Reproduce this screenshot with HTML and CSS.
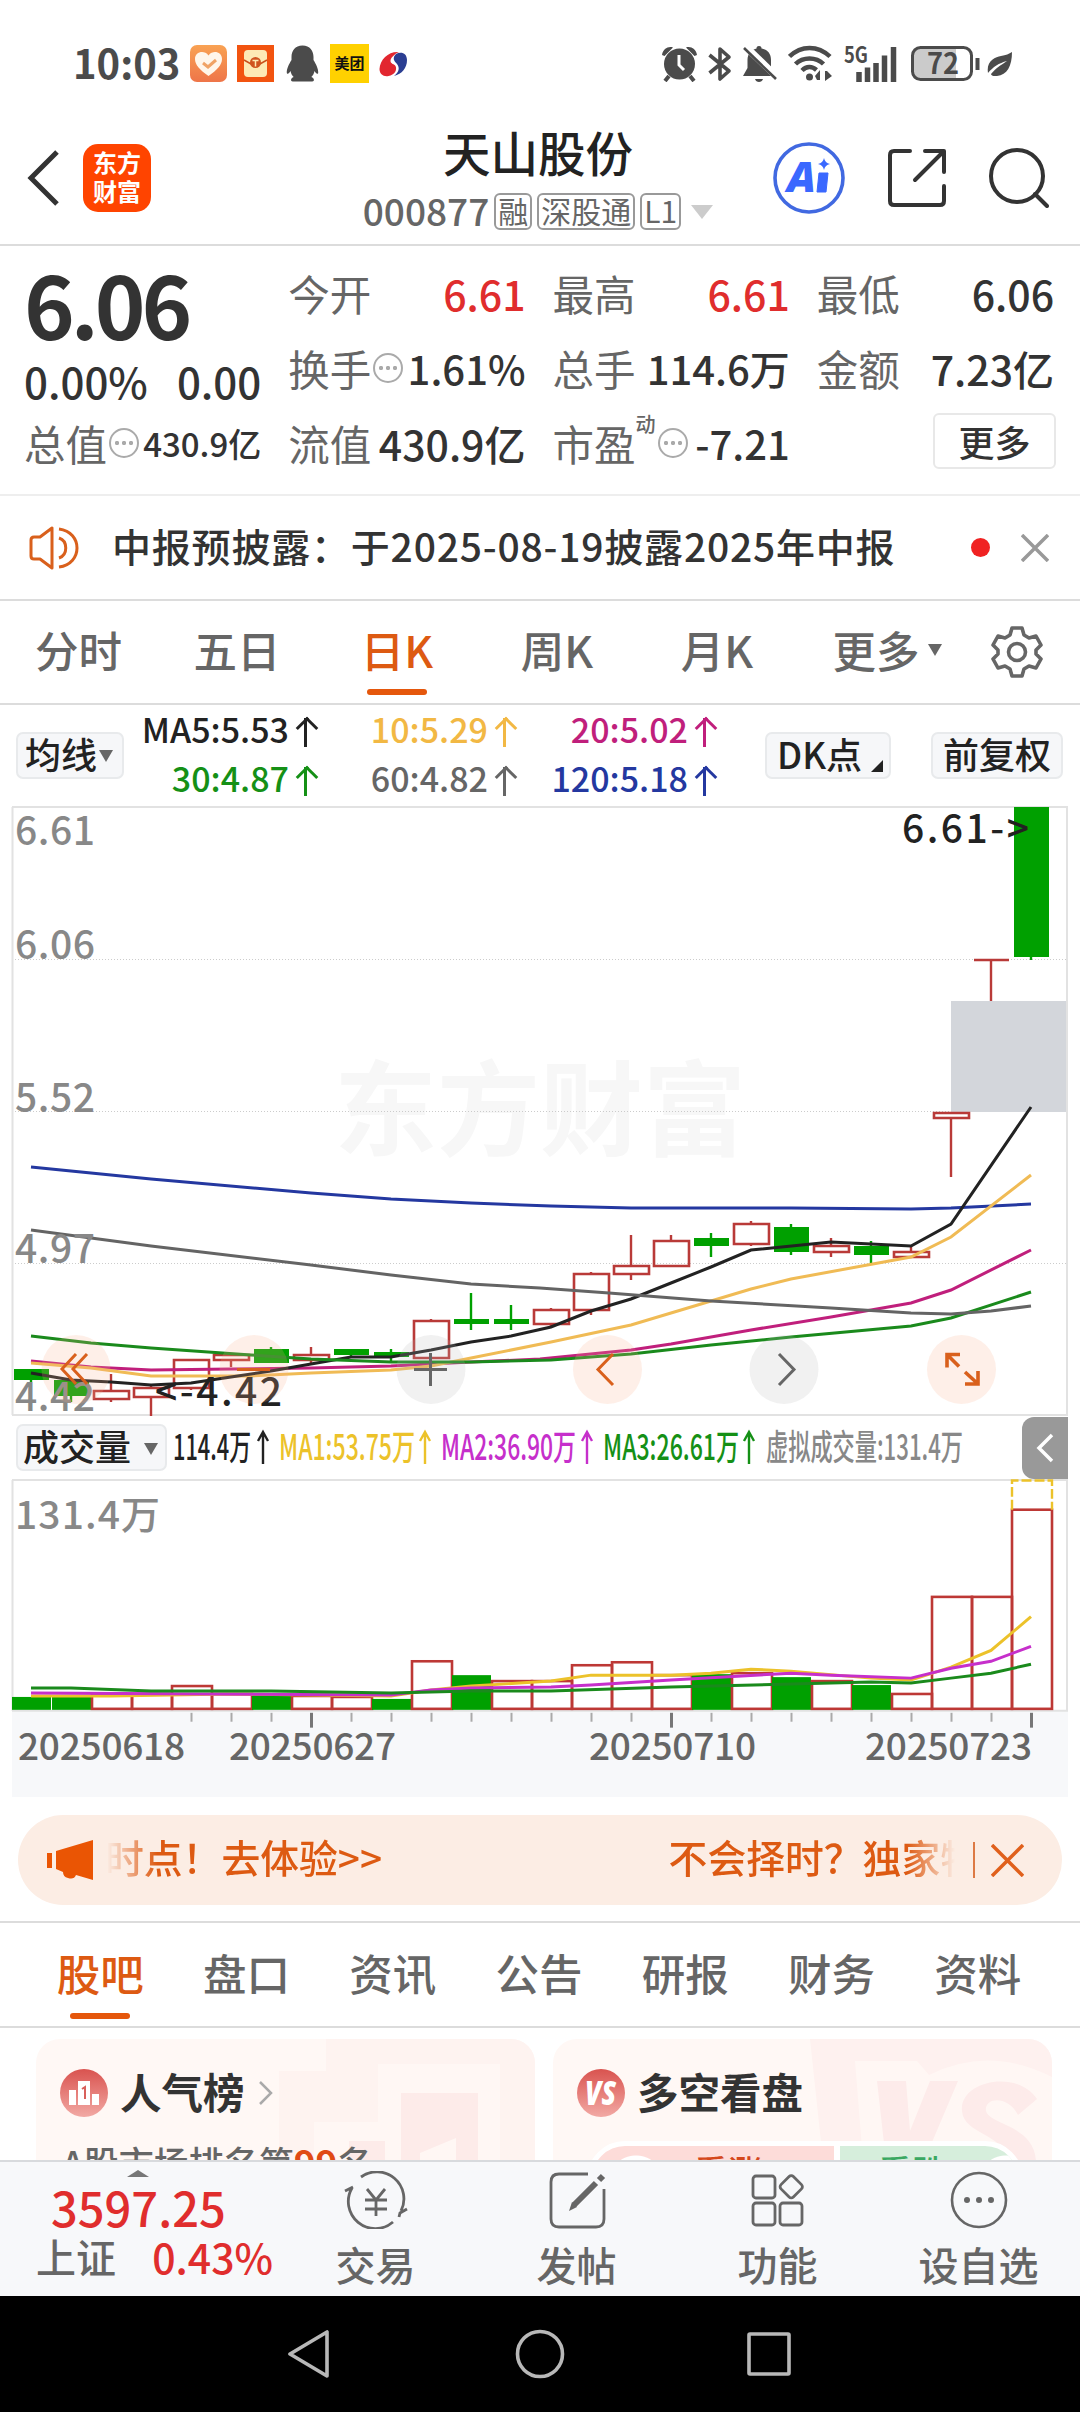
FILE: index.html
```html
<!DOCTYPE html>
<html lang="zh-CN">
<head>
    <meta charset="UTF-8">
    <meta name="viewport" content="width=device-width, initial-scale=1.0">
    <title>天山股份 000877</title>
    <link rel="stylesheet" href="styles.css">
</head>
<body>
    <div class="status-bar">
        <span class="clock">10:03</span>
        <div class="status-left">
            <svg width="37" height="37" viewBox="0 0 37 37">
                <defs><linearGradient id="heart-bg" x1="0" y1="0" x2="0" y2="1"><stop offset="0" stop-color="#f9a253"/><stop offset="1" stop-color="#ee7549"/></linearGradient></defs>
                <rect width="37" height="37" rx="7" fill="url(#heart-bg)"/>
                <path d="M18.500 31C10 25 5 20 5 14c0-7 9-9.500 13.500-3.500C23 4.500 32 7 32 14c0 6-5 11-13.500 17z" fill="#fff6ea"/>
                <path d="M13 18l5 4 8-7" fill="none" stroke="#f0a365" stroke-width="3"/>
            </svg>
            <svg width="37" height="37" viewBox="0 0 37 37">
                <rect width="37" height="37" fill="#f25410"/>
                <rect x="7" y="5" width="23" height="27" rx="4" fill="#fdeab5"/>
                <path d="M7 15l7 4h9l7-4" fill="none" stroke="#c9501c" stroke-width="1.500"/>
                <circle cx="18.500" cy="17.500" r="5.500" fill="#cf5420"/>
                <path d="M15.500 15.500h6M18.500 15.500v6" stroke="#fdeab5" stroke-width="1.500"/>
            </svg>
            <svg class="penguin" width="33" height="37" viewBox="0 0 33 37">
                <path d="M16.500 0.500C9 0.500 5.500 6 5.500 12v3C3 19 .5 24 .8 28c.7 2 2.500 0 3.700-2 .5 2.500 1.500 4.500 3.200 6-3.500 1.500-3.200 4.500-1 4.500h19.600c2.200 0 2.500-3-1-4.500 1.700-1.500 2.700-3.500 3.200-6 1.200 2 3 4 3.700 2 .3-4-2.200-9-4.700-13v-3c0-6-3.500-11.500-11-11.500z" fill="#4b4b4b"/>
            </svg>
            <span class="meituan">美团</span>
            <svg width="29" height="26" viewBox="0 0 29 26">
                <path d="M20 1C10 0 1 8 .5 18c0 5 4 8 9 7 6-1 9-6 7-10-1-2-5-2-5-5s4-7 8.500-9z" fill="#e2262f"/>
                <path d="M17 3c5-3 11-1 11 6 0 8-5 14-13 16 5-4 6-8 3-12-3-3-5-6-1-10z" fill="#2b3e92"/>
            </svg>
        </div>
        <div class="status-right">
            <svg width="35" height="36" viewBox="0 0 35 36" fill="#4b4b4b">
                <circle cx="17.500" cy="18" r="15.500"/>
                <path d="M0 9C1 3 6 0 11 1.500L2.500 10zM35 9C34 3 29 0 24 1.500L32.500 10z"/>
                <path d="M7 30l-4 5M28 30l4 5" stroke="#4b4b4b" stroke-width="4"/>
                <path d="M17 9v10l5 5" fill="none" stroke="#fff" stroke-width="3"/>
            </svg>
            <svg width="24" height="36" viewBox="0 0 24 36">
                <path d="M1.500 9L21 25 12 33V3l9 8L1.500 27" fill="none" stroke="#4b4b4b" stroke-width="3.600" stroke-linejoin="round"/>
            </svg>
            <svg width="34" height="38" viewBox="0 0 34 38">
                <path d="M16 1c2 0 2.500 1 2.500 2.500C25 5 28 9 28 15v8l4 8H0l4.500-8v-8c0-6 3-10 9-11.500C13.500 2 14 1 16 1zM12 34h8c-1 4-7 4-8 0z" fill="#4b4b4b"/>
                <path d="M2 1l32 31" stroke="#fff" stroke-width="7"/>
                <path d="M1 3l32 31" stroke="#4b4b4b" stroke-width="2.600"/>
            </svg>
            <svg width="45" height="37" viewBox="0 0 45 37" fill="none" stroke="#4b4b4b" stroke-width="4.500">
                <path d="M1.500 11.500C13 0 30 0 42 11.500M7.500 19C15 11.500 28 11.500 35.500 19M14 25.500c4.500-4.500 10-4.500 14.500-.5"/>
                <circle cx="21.500" cy="32" r="3.500" fill="#4b4b4b" stroke="none"/>
                <path d="M27 31l5-6v10h-3zM37 36V26h2l5 5z" fill="#4b4b4b" stroke="none"/>
            </svg>
            <svg class="signal" width="53" height="36" viewBox="0 0 53 36">
                <text x="0" y="17" textLength="24" lengthAdjust="spacingAndGlyphs">5G</text>
                <path d="M15 36V26M23.500 36V21.500M32 36V17M40.500 36V9.500M49.500 36V1" stroke="#4b4b4b" stroke-width="5.500"/>
            </svg>
            <svg class="battery" width="70" height="36" viewBox="0 0 70 36">
                <path d="M8 2h37v32H8q-6 0-6-6V8q0-6 6-6z" fill="#cbcbcb"/>
                <rect x="1.500" y="1.500" width="59" height="32" rx="8" fill="none" stroke="#4b4b4b" stroke-width="3"/>
                <path d="M66.500 12v12" stroke="#4b4b4b" stroke-width="4"/>
                <text x="16" y="28" textLength="32" lengthAdjust="spacingAndGlyphs">72</text>
            </svg>
            <svg width="26" height="26" viewBox="0 0 26 26">
                <path d="M25 1c0 14-5 23-15 24-4 .3-6-.5-6-2 5-6 10-9 16-13C12 12 6 16 1 22-1 10 8 6 14 5c5-1 8-2 11-4z" fill="#4b4b4b"/>
            </svg>
        </div>
    </div>

    <div class="header">
        <div class="header-left">
            <svg width="32" height="56" viewBox="0 0 32 56"><path d="M30 2L4 28l26 26" fill="none" stroke="#333" stroke-width="5"/></svg>
            <div class="logo">东方<br>财富</div>
        </div>
        <div class="header-title">
            <div class="stock-name">天山股份</div>
            <div class="stock-code">
                <span class="code">000877</span>
                <span class="tag">融</span><span class="tag">深股通</span><span class="tag">L1</span>
                <span class="caret"></span>
            </div>
        </div>
        <div class="header-right">
            <svg width="72" height="72" viewBox="0 0 72 72">
                <circle cx="36" cy="36" r="34" fill="none" stroke="#4169e1" stroke-width="3.600"/>
                <text x="14" y="50" class="ai-text" textLength="29" lengthAdjust="spacingAndGlyphs">A</text>
                <path d="M46 31h9l-2 19h-9z" fill="#3a68ff" stroke="#3a68ff" stroke-linejoin="round"/>
                <path d="M51 16q1 5 6 6-5 1-6 6-1-5-6-6 5-1 6-6z" fill="#3a68ff"/>
            </svg>
            <svg width="58" height="58" viewBox="0 0 58 58" fill="none" stroke="#333" stroke-width="4" stroke-linecap="round" stroke-linejoin="round">
                <path d="M22 2H6Q2 2 2 6v46q0 4 4 4h46q4 0 4-4V37M37 2h19v21M55 3L27 31"/>
            </svg>
            <svg width="60" height="60" viewBox="0 0 60 60" fill="none" stroke="#333" stroke-width="4" stroke-linecap="round">
                <circle cx="28" cy="28" r="26"/><path d="M46 46l12 12"/>
            </svg>
        </div>
    </div>

    <div class="quote">
        <div class="quote-main">
            <div class="price">6.06</div>
            <div class="change"><span>0.00%</span><span>0.00</span></div>
            <div class="item"><label>总值</label><i class="more-dot"></i><b class="small">430.9亿</b></div>
        </div>
        <div class="quote-col">
            <div class="item"><label>今开</label><b class="up">6.61</b></div>
            <div class="item"><label>换手</label><i class="more-dot"></i><b class="mid">1.61%</b></div>
            <div class="item"><label>流值</label><b>430.9亿</b></div>
        </div>
        <div class="quote-col">
            <div class="item"><label>最高</label><b class="up">6.61</b></div>
            <div class="item"><label>总手</label><b class="mid">114.6万</b></div>
            <div class="item"><label>市盈</label><sup>动</sup><i class="more-dot"></i><b class="mid">-7.21</b></div>
        </div>
        <div class="quote-col">
            <div class="item"><label>最低</label><b>6.06</b></div>
            <div class="item"><label>金额</label><b>7.23亿</b></div>
            <div class="item"><button class="more-btn">更多</button></div>
        </div>
    </div>

    <div class="notice">
        <svg width="52" height="44" viewBox="0 0 52 44" fill="none" stroke="#d9601c" stroke-width="3">
            <path d="M23 2v40L11 33H5q-3 0-3-3V14q0-3 3-3h6z" stroke-linejoin="round"/>
            <path d="M30 12c9 3 9 17 0 20M30 3c24 3 24 35 0 38"/>
        </svg>
        <span class="notice-text">中报预披露：于2025-08-19披露2025年中报</span>
        <span class="red-dot"></span>
        <svg width="28" height="28" viewBox="0 0 28 28"><path d="M1 1l26 26M27 1L1 27" stroke="#999" stroke-width="3.500"/></svg>
    </div>

    <div class="period-tabs">
        <span>分时</span><span>五日</span><span class="active">日K</span><span>周K</span><span>月K</span>
        <span>更多<i class="tri"></i></span>
        <svg width="52" height="52" viewBox="0 0 52 52" fill="none" stroke="#666" stroke-width="3.600" stroke-linejoin="round">
            <path d="M21 2h10l2 7 5 3 7-2 5 9-5 5v4l5 5-5 9-7-2-5 3-2 7H21l-2-7-5-3-7 2-5-9 5-5v-4l-5-5 5-9 7 2 5-3z"/>
            <circle cx="26" cy="26" r="8.500"/>
        </svg>
    </div>

    <div class="ma-bar">
        <span class="chip chip-line">均线<i class="tri"></i></span>
        <div class="ma-grid">
            <span class="c-black">MA5:5.53<em></em></span><span class="c-yellow">10:5.29<em></em></span><span class="c-pink">20:5.02<em></em></span>
            <span class="c-green">30:4.87<em></em></span><span class="c-gray">60:4.82<em></em></span><span class="c-blue">120:5.18<em></em></span>
        </div>
        <span class="chip chip-dk">DK点<i class="corner"></i></span>
        <span class="chip chip-fq">前复权</span>
    </div>

    <svg class="k-chart" id="k-chart" width="1080" height="611" viewBox="0 806 1080 611"></svg>

    <div class="vol-bar">
        <span class="chip chip-vol">成交量<i class="tri"></i></span>
        <svg class="vol-legend" width="800" height="64" viewBox="170 1416 800 64">
            <text x="173" y="1460" textLength="78" lengthAdjust="spacingAndGlyphs" fill="#222">114.4万</text>
            <text x="279" y="1460" textLength="136" lengthAdjust="spacingAndGlyphs" fill="#ecc22a">MA1:53.75万</text>
            <text x="441" y="1460" textLength="135" lengthAdjust="spacingAndGlyphs" fill="#c62fcb">MA2:36.90万</text>
            <text x="603" y="1460" textLength="136" lengthAdjust="spacingAndGlyphs" fill="#159016">MA3:26.61万</text>
            <text x="766" y="1460" textLength="197" lengthAdjust="spacingAndGlyphs" fill="#888">虚拟成交量:131.4万</text>
            <g fill="none" stroke-width="2.400">
                <path d="M263 1464v-32m-5 9l5-9 5 9" stroke="#222"/>
                <path d="M425 1464v-32m-5 9l5-9 5 9" stroke="#ecc22a"/>
                <path d="M587 1464v-32m-5 9l5-9 5 9" stroke="#c62fcb"/>
                <path d="M749 1464v-32m-5 9l5-9 5 9" stroke="#159016"/>
            </g>
        </svg>
        <div class="collapse"><svg width="18" height="30" viewBox="0 0 18 30"><path d="M16 2L3 15l13 13" fill="none" stroke="#fff" stroke-width="3.500"/></svg></div>
    </div>

    <svg class="vol-chart" id="vol-chart" width="1080" height="318" viewBox="0 1479 1080 321" preserveAspectRatio="none"></svg>

    <div class="banner">
        <svg width="48" height="40" viewBox="0 0 48 40" fill="#ea5504"><path d="M0 13h5v15H0zM9 11l37-11v40l-17-5q-2 5-8 3-5-1-5-6l-7-3z"/></svg>
        <div class="marquee"><span>时点！去体验&gt;&gt;</span><span>不会择时？独家特</span></div>
        <i class="sep"></i>
        <svg width="33" height="33" viewBox="0 0 33 33"><path d="M1 1l31 31M32 1L1 32" stroke="#e0601c" stroke-width="3.500"/></svg>
    </div>

    <div class="info-tabs">
        <span class="active">股吧</span><span>盘口</span><span>资讯</span><span>公告</span><span>研报</span><span>财务</span><span>资料</span>
    </div>

    <div class="cards">
        <div class="card card-rank">
            <svg class="art" width="499" height="122" viewBox="0 0 499 122">
                <path d="M290 0h209v122H243V32h47z" fill="#fef3f0"/>
                <path d="M342 25h122v97H278V83h64z" fill="#fff7f4"/>
                <path d="M365 54h77v68h-22V99l-36 15v8h-19zM313 102h36v20h-36z" fill="#fdebe9"/>
            </svg>
            <div class="card-title">
                <svg width="48" height="48" viewBox="0 0 48 48">
                    <defs><linearGradient id="red-bg" x1="0" y1="0" x2="0" y2="1"><stop offset="0" stop-color="#d9534f"/><stop offset="1" stop-color="#f2a9a4"/></linearGradient></defs>
                    <circle cx="24" cy="24" r="24" fill="url(#red-bg)"/>
                    <path d="M9 21h7v15H9zM18 12h12v24H18zM32 25h7v11h-7z" fill="#fff"/>
                    <path d="M22 20l3-2v12" fill="none" stroke="#d9605b" stroke-width="2"/>
                </svg>
                <h3>人气榜</h3>
                <svg width="15" height="24" viewBox="0 0 15 24"><path d="M2 1l11 11L2 23" fill="none" stroke="#aaa" stroke-width="2.500"/></svg>
            </div>
            <div class="rank-text">A股市场排名第<b>99</b>名</div>
        </div>
        <div class="card card-vs">
            <svg class="art" width="499" height="122" viewBox="0 0 499 122">
                <path d="M257 0h242v122H270z" fill="#fef1ef"/>
                <path d="M302 22h62l12 14q60-30 123 2v84H310z" fill="#fff7f4"/>
                <path d="M324 42h29l4 50 20-50h28l-34 80h-38zM484 60c-20-30-78-18-75 12 2 24 42 22 46 50h28c-2-36-46-36-50-50-2-14 22-16 32 4z" fill="#fdebea"/>
            </svg>
            <div class="card-title">
                <svg width="48" height="48" viewBox="0 0 48 48">
                    <circle cx="24" cy="24" r="24" fill="url(#red-bg)"/>
                    <text x="8" y="36" class="vs-text" textLength="31" lengthAdjust="spacingAndGlyphs">VS</text>
                </svg>
                <h3>多空看盘</h3>
            </div>
            <div class="vote"><div class="bull">看涨</div><div class="bear">看跌</div></div>
        </div>
    </div>

    <div class="bottom-bar">
        <div class="index">
            <i class="tri-up"></i>
            <div class="index-value">3597.25</div>
            <div class="index-row"><span>上证</span><b>0.43%</b></div>
        </div>
        <div class="action">
            <svg width="66" height="58" viewBox="0 0 66 58" fill="none" stroke="#666" stroke-width="2.800">
                <path d="M18 6A27 27 0 0 1 58 40M50 51A27 27 0 0 1 9 17M2 20l8-4M64 38l-7 4-1 4M24 18l9 11 9-11M33 29v16M22 29h22M22 38h22"/>
            </svg>
            <span>交易</span>
        </div>
        <div class="action">
            <svg width="58" height="58" viewBox="0 0 58 58" fill="none" stroke="#666" stroke-width="2.800">
                <path d="M40 3H11Q3 3 3 11v37q0 8 8 8h37q8 0 8-8V18"/>
                <path d="M26 34l22-22M51 9l4-4" stroke-width="6"/>
                <path d="M24 31l5 5-8 4z" fill="#666" stroke="none"/>
            </svg>
            <span>发帖</span>
        </div>
        <div class="action">
            <svg width="54" height="58" viewBox="0 0 54 58" fill="none" stroke="#666" stroke-width="2.800">
                <rect x="2" y="5" width="22" height="22" rx="3"/><rect x="2" y="32" width="22" height="22" rx="3"/><rect x="29" y="32" width="22" height="22" rx="3"/>
                <rect x="31.500" y="7" width="17.500" height="17.500" rx="3" transform="rotate(45 40.250 15.750)"/>
            </svg>
            <span>功能</span>
        </div>
        <div class="action">
            <svg width="58" height="58" viewBox="0 0 58 58" fill="#666">
                <circle cx="29" cy="29" r="27" fill="none" stroke="#666" stroke-width="2.600"/>
                <circle cx="17" cy="29" r="3"/><circle cx="29" cy="29" r="3"/><circle cx="41" cy="29" r="3"/>
            </svg>
            <span>设自选</span>
        </div>
    </div>

    <div class="sys-nav">
        <svg width="504" height="52" viewBox="0 0 504 52" fill="none" stroke="#b8b8b8" stroke-width="3.600" stroke-linejoin="round">
            <path d="M39 4v44L2 26z"/><circle cx="252" cy="26" r="22.500"/><rect x="461" y="6" width="40" height="40" rx="1"/>
        </svg>
    </div>

    <script>
        // top, bottom, high, low, rising
        const candles = [
            [1369, 1380, 1369, 1382, 0], [1380, 1396, 1380, 1402, 0], [1391, 1399, 1374, 1402, 1], [1388, 1397, 1385, 1416, 1],
            [1360, 1388, 1360, 1390, 1], [1355, 1360, 1355, 1367, 1], [1349, 1363, 1347, 1363, 0], [1355, 1360, 1347, 1365, 1],
            [1349, 1355, 1349, 1357, 0], [1352, 1357, 1349, 1361, 0], [1321, 1358, 1319, 1358, 1], [1319, 1324, 1293, 1330, 0],
            [1319, 1324, 1305, 1330, 0], [1310, 1324, 1308, 1328, 1], [1274, 1310, 1272, 1315, 1], [1266, 1274, 1235, 1280, 1],
            [1241, 1266, 1235, 1266, 1], [1238, 1246, 1233, 1257, 0], [1224, 1244, 1221, 1246, 1], [1227, 1252, 1224, 1255, 0],
            [1246, 1252, 1238, 1257, 1], [1246, 1255, 1241, 1263, 0], [1252, 1257, 1246, 1257, 1], [1113, 1118, 1113, 1177, 1],
            [960, 960, 960, 1001, 1], [807, 957, 807, 960, 0]
        ];
        const averages = {
            '#2438a0': '31,1167 151,1179 311,1193 391,1199 471,1203 551,1206 631,1208 791,1208 911,1209 951,1208 1031,1204',
            '#c01f7c': '31,1361 91,1367 151,1370 231,1369 311,1368 391,1366 471,1362 540,1359 631,1350 671,1344 751,1330 831,1317 911,1303 951,1290 1031,1250',
            '#f0bb55': '31,1363 91,1368 151,1376 251,1376 311,1373 391,1370 431,1366 471,1358 551,1342 631,1325 671,1313 751,1289 791,1279 911,1257 951,1237 1031,1175',
            '#222': '31,1373 71,1380 111,1382 151,1385 191,1383 231,1377 271,1371 311,1364 351,1357 391,1357 431,1350 471,1342 511,1336 551,1327 591,1311 631,1299 671,1283 711,1267 751,1250 831,1242 871,1244 911,1246 951,1224 1031,1107',
            '#1a8a1c': '31,1336 91,1343 151,1348 251,1355 311,1359 391,1362 471,1362 551,1360 631,1354 711,1345 791,1337 911,1326 951,1318 1031,1292',
            '#646464': '31,1230 151,1246 311,1265 391,1275 471,1284 540,1288 609,1293 711,1301 831,1308 911,1313 951,1314 991,1311 1031,1306'
        };
        const RED = '#b93a38', GREEN = '#00a000';
        const line = (pts, color) => `<polyline points="${pts}" fill="none" stroke="${color}" stroke-width="3"/>`;

        let k = '<text x="334" y="1148" class="watermark" textLength="412">东方财富</text>';
        [959.5, 1111.5, 1263.5].forEach(y => {
            k += `<path d="M12 ${y}H1067" stroke="#ccc" stroke-dasharray="1 2"/>`;
        });
        k += '<rect x="951" y="1001" width="116" height="111" fill="#d3d6db"/>';
        k += '<path d="M12.500 807V1415M1067 807V1415M12 807H1068M12 1415H1068" stroke="#e2e2e2" stroke-width="2"/>';
        candles.forEach(([top, bottom, high, low, up], i) => {
            const x = 31 + i * 40, color = up ? RED : GREEN;
            k += `<path d="M${x} ${high}V${top}M${x} ${bottom}V${low}" stroke="${color}" stroke-width="2.400"/>`;
            k += up
                ? `<path d="M${x - 17} ${top}h35v${bottom - top}h-35z" fill="none" stroke="${color}" stroke-width="2.600"/>`
                : `<rect x="${x - 17}" y="${top}" width="35" height="${bottom - top}" fill="${color}"/>`;
        });
        for (const color in averages) k += line(averages[color], color);
        [[845, '6.61'], [959, '6.06'], [1112, '5.52'], [1263, '4.97'], [1411, '4.42']].forEach(([y, t]) => {
            k += `<text x="15" y="${y}" class="axis-label" textLength="80">${t}</text>`;
        });
        k += '<text x="902" y="843" class="mark" textLength="127">6.61-&gt;</text><text x="155" y="1406" class="mark" textLength="127">&lt;-4.42</text>';

        // floating chart tools
        [[76, 1], [254, 1], [431, 0], [607.5, 1], [784, 0], [961.5, 1]].forEach(([x, warm]) => {
            k += `<circle cx="${x}" cy="1369.500" r="34.500" fill="${warm ? '#f9b08c' : '#bbb'}" opacity="0.2"/>`;
        });
        k += `<g fill="none" stroke="#d9601c" stroke-width="3">
            <path d="M76 1354l-14 15 14 15M87 1354l-14 15 14 15M237 1369.500h33M613 1354l-15 15.500 15 15.500"/>
            <path d="M960 1354.500h-13v13M948 1355.500l11 11M978 1371v13h-13M977 1383l-12-11" stroke-width="3.600"/></g>
            <g fill="none" stroke="#666" stroke-width="3"><path d="M414 1369.500h33M430.500 1353v33M779 1354l15 15.500-15 15.500"/></g>`;
        document.getElementById('k-chart').innerHTML = k;

        const volumes = [
            [1699, 0], [1699, 0], [1697, 1], [1696, 1], [1688, 1], [1696, 1], [1696, 0], [1698, 1], [1699, 1], [1701, 0],
            [1663, 1], [1677, 0], [1683, 1], [1683, 1], [1667, 1], [1664, 1], [1677, 1], [1676, 0], [1675, 1], [1679, 0],
            [1683, 1], [1687, 0], [1696, 1], [1598, 1], [1598, 1], [1510, 1]
        ];
        let v = '<rect x="12" y="1713" width="1056" height="87" fill="#f7f8fa"/>';
        v += '<path d="M12.500 1480V1713M1067 1480V1713M12 1480H1068M12 1713H1068" stroke="#e2e2e2" stroke-width="2"/>';
        volumes.forEach(([top, up], i) => {
            const x = 12 + i * 40;
            v += up
                ? `<rect x="${x}" y="${top}" width="40" height="${1711 - top}" fill="none" stroke="#bd3835" stroke-width="2.600"/>`
                : `<rect x="${x}" y="${top}" width="39" height="${1712 - top}" fill="${GREEN}"/>`;
        });
        v += '<path d="M1012 1510V1480.500H1052V1510" fill="none" stroke="#ecc22a" stroke-width="2.400" stroke-dasharray="10 3"/>';
        v += line('31,1698 111,1698 231,1696 391,1698 431,1692 471,1688 551,1683 591,1677 671,1677 711,1675 751,1671 791,1673 871,1680 911,1682 951,1669 991,1652 1031,1618', '#ecc22a');
        v += line('31,1695 391,1697 431,1692 471,1690 551,1689 591,1687 671,1682 791,1675 831,1677 911,1680 951,1670 991,1663 1031,1648', '#c62fcb');
        v += line('31,1690 71,1690 151,1693 271,1693 391,1695 471,1693 551,1693 671,1689 791,1686 871,1684 911,1685 951,1680 991,1675 1031,1666', '#1a8a1c');
        for (let x = 191; x <= 1031; x += 40) {
            const major = (x - 311) % 360 === 0;
            v += `<path d="M${x + 0.5} 1715V${major ? 1730 : 1724}" stroke="${major ? '#777' : '#aaa'}" stroke-width="${major ? 3 : 2}"/>`;
        }
        [[18, '20250618'], [229, '20250627'], [589, '20250710'], [865, '20250723']].forEach(([x, t]) => {
            v += `<text x="${x}" y="1763" class="date-label" textLength="167">${t}</text>`;
        });
        v += '<text x="15" y="1529" class="axis-label" textLength="145">131.4万</text>';
        document.getElementById('vol-chart').innerHTML = v;
    </script>
</body>
</html>
```
FILE: styles.css
```css
* {
    margin: 0;
    padding: 0;
    box-sizing: border-box;
}

body {
    width: 1080px;
    height: 2412px;
    overflow: hidden;
    background: #fff;
    color: #333;
    font-family: "Noto Sans CJK SC", "Noto Sans", sans-serif;
    font-weight: 500;
}

i, em {
    font-style: normal;
}

svg {
    display: block;
    flex: none;
}

/* status bar */
.status-bar {
    height: 114px;
    padding: 13px 67px 0 73px;
    display: flex;
    align-items: center;
}

.clock {
    width: 117px;
    margin-top: -4px;
    font-size: 40px;
    line-height: 40px;
    font-weight: 700;
    color: #4b4b4b;
    white-space: nowrap;
}

.status-left {
    display: flex;
    align-items: center;
    gap: 10px;
}

.penguin {
    margin: 0 1px 0 2px;
}

.meituan {
    width: 39px;
    height: 39px;
    background: #ffd100;
    color: #111;
    font-size: 15px;
    line-height: 37px;
    font-weight: 700;
    text-align: center;
}

.status-right {
    margin-left: auto;
    display: flex;
    align-items: center;
    gap: 11px;
}

.signal text {
    font-size: 22px;
    font-weight: 700;
    fill: #4b4b4b;
}

.signal {
    margin-right: 3px;
}

.battery {
    margin-right: -5px;
}

.battery text {
    font-size: 29px;
    font-weight: 700;
    fill: #4b4b4b;
}

/* header */
.header {
    height: 132px;
    padding: 0 31px 0 27px;
    display: grid;
    grid-template-columns: 280px 1fr 280px;
    border-bottom: 2px solid #dcdcdc;
}

.header-left {
    display: flex;
    align-items: center;
    gap: 24px;
    height: 128px;
}

.logo {
    width: 68px;
    height: 68px;
    padding-top: 3px;
    border-radius: 15px;
    background: #ff4400;
    color: #fff;
    font-size: 24px;
    line-height: 29px;
    font-weight: 700;
    text-align: center;
}

.header-title {
    display: flex;
    flex-direction: column;
    align-items: center;
}

.stock-name {
    margin-top: 14px;
    font-size: 47.5px;
    line-height: 48px;
    font-weight: 500;
    color: #222;
}

.stock-code {
    display: flex;
    align-items: center;
    margin-top: 17px;
    gap: 5px;
    color: #666;
}

.code {
    font-size: 37px;
    line-height: 36px;
    margin-top: -4px;
}

.tag {
    height: 37px;
    padding: 0 2px;
    border: 2px solid #999;
    border-radius: 6px;
    font-size: 30px;
    line-height: 30px;
    font-weight: 400;
}

.caret {
    margin-left: 5px;
    border: 11px solid transparent;
    border-top: 14px solid #ccc;
    border-bottom: 0;
}

.header-right {
    display: flex;
    align-items: center;
    justify-content: flex-end;
    height: 128px;
    gap: 43px;
}

.ai-text {
    font-family: "Open Sans", sans-serif;
    font-size: 43px;
    font-weight: 800;
    font-style: italic;
    fill: #3a68ff;
}

/* quote */
.quote {
    height: 250px;
    padding: 9px 26px 0 24px;
    display: grid;
    grid-template-columns: repeat(4, 1fr);
    gap: 27px;
    border-bottom: 2px solid #eee;
}

.item {
    height: 75px;
    display: flex;
    align-items: center;
    white-space: nowrap;
}

.item label {
    font-size: 41.5px;
    line-height: 42px;
    color: #666;
    font-weight: 400;
}

.item b {
    margin-left: auto;
    font-size: 41px;
    line-height: 42px;
    font-weight: 500;
}

.item b.small {
    font-size: 33px;
}

.item b.mid {
    font-size: 40px;
}

.item b.up {
    color: #e02d2d;
}

.item sup {
    font-size: 20px;
    line-height: 20px;
    margin-top: -38px;
    color: #666;
}

.more-dot {
    width: 30px;
    height: 30px;
    margin-left: 2px;
    border: 2px solid #aaa;
    border-radius: 50%;
    background:
        radial-gradient(circle at 6px 13px, #aaa 1.8px, transparent 2.5px),
        radial-gradient(circle at 13px 13px, #aaa 1.8px, transparent 2.5px),
        radial-gradient(circle at 20px 13px, #aaa 1.8px, transparent 2.5px);
}

.price {
    height: 95px;
    font-size: 86px;
    line-height: 95px;
    font-weight: 700;
    letter-spacing: -4px;
}

.change {
    height: 55px;
    display: flex;
    justify-content: space-between;
    font-size: 42px;
    line-height: 62px;
}

.more-btn {
    width: 123px;
    height: 56px;
    margin: -4px -2px 0 auto;
    border: 2px solid #e8e8e8;
    border-radius: 6px;
    background: #fff;
    color: #333;
    font: 500 36px/50px "Noto Sans CJK SC", sans-serif;
}

/* notice */
.notice {
    height: 105px;
    padding: 0 31px 0 29px;
    display: flex;
    align-items: center;
    border-bottom: 2px solid #dcdcdc;
}

.notice-text {
    margin-left: 31px;
    font-size: 39px;
    line-height: 60px;
    margin-top: -6px;
    letter-spacing: 0.8px;
    white-space: nowrap;
}

.red-dot {
    width: 19px;
    height: 19px;
    margin-left: auto;
    margin-right: 31px;
    border-radius: 50%;
    background: #f02222;
}

/* period tabs */
.period-tabs {
    height: 104px;
    display: grid;
    grid-template-columns: 157px repeat(4, 160px) 180px 80px;
    justify-items: center;
    align-items: center;
    border-bottom: 2px solid #dcdcdc;
    font-size: 43.5px;
    line-height: 60px;
    color: #666;
}

.period-tabs > span {
    height: 98px;
    line-height: 93px;
}

.period-tabs .active,
.info-tabs .active {
    position: relative;
    color: #dd5a12;
}

.period-tabs .active::after,
.info-tabs .active::after {
    content: "";
    position: absolute;
    left: calc(50% - 30px);
    bottom: 6px;
    width: 60px;
    height: 6px;
    border-radius: 3px;
    background: #e5570c;
}

.tri {
    display: inline-block;
    margin-left: 8px;
    border: 7.5px solid transparent;
    border-top: 12px solid #666;
    border-bottom: 0;
    vertical-align: 12px;
}

/* moving average bar */
.ma-bar {
    height: 101px;
    padding-left: 16px;
    display: flex;
    align-items: center;
}

.chip {
    height: 47px;
    border: 2px solid #e8eaec;
    border-radius: 7px;
    background: #f6f7f9;
    color: #222;
    font-size: 36px;
    line-height: 39px;
    white-space: nowrap;
}

.chip-line {
    width: 108px;
    padding-left: 7px;
}

.chip-line .tri {
    margin-left: 2px;
    vertical-align: 7px;
}

.ma-grid {
    display: grid;
    grid-template-columns: 194px 199px 200px;
    font-size: 34px;
    line-height: 49px;
    text-align: right;
    height: 98px;
    margin: -5px 3px 0 -3px;
}

.ma-grid em {
    display: inline-block;
    position: relative;
    width: 20px;
    height: 29px;
    margin-left: 6px;
    vertical-align: -4px;
    background: linear-gradient(currentColor, currentColor) center / 3px 100% no-repeat;
}

.ma-grid em::before {
    content: "";
    position: absolute;
    left: 3.5px;
    top: 2px;
    width: 13px;
    height: 13px;
    border-top: 3px solid;
    border-left: 3px solid;
    transform: rotate(45deg);
}

.c-black { color: #222; }
.c-yellow { color: #f2b844; }
.c-pink { color: #c01f7c; }
.c-green { color: #159016; }
.c-gray { color: #666; }
.c-blue { color: #2438a0; }

.chip-dk {
    width: 126px;
    margin-left: 48px;
    padding-left: 10px;
}

.corner {
    display: inline-block;
    margin-left: 9px;
    border-left: 12px solid transparent;
    border-bottom: 12px solid #222;
    vertical-align: -3px;
}

.chip-fq {
    width: 132px;
    margin-left: 40px;
    padding-left: 10px;
}

/* charts */
.axis-label {
    font-size: 39px;
    fill: #888;
}

.mark {
    font-size: 39px;
    fill: #222;
}

.date-label {
    font-size: 37px;
    fill: #666;
}

.watermark {
    font-size: 103px;
    font-weight: 700;
    fill: #f7f7f7;
}

.vol-bar {
    height: 62px;
    padding: 0 12px 0 16px;
    display: flex;
    align-items: center;
}

.chip-vol {
    width: 151px;
    margin-top: -2px;
    padding-left: 5px;
}

.chip-vol .tri {
    margin-left: 13px;
    vertical-align: 6px;
}

.vol-legend {
    margin-left: 3px;
}

.vol-legend text {
    font-size: 35px;
}

.collapse {
    width: 46px;
    height: 62px;
    margin-left: auto;
    display: flex;
    align-items: center;
    justify-content: center;
    border-radius: 12px 0 0 12px;
    background: #999;
}

/* promo banner */
.banner {
    height: 90px;
    margin: 18px 18px 16px;
    padding: 0 38px 0 29px;
    display: flex;
    align-items: center;
    border-radius: 45px;
    background: #fcede4;
}

.marquee {
    width: 849px;
    margin-left: 12px;
    margin-right: 1px;
    margin-top: -8px;
    display: flex;
    justify-content: space-between;
    overflow: hidden;
    white-space: nowrap;
    font-size: 38.8px;
    line-height: 60px;
    color: #dd5a12;
    -webkit-mask-image: linear-gradient(90deg, transparent, #000 50px, #000 800px, transparent);
    mask-image: linear-gradient(90deg, transparent, #000 50px, #000 800px, transparent);
}

.marquee span:first-child {
    margin-left: -2px;
}

.marquee span:last-child {
    margin-right: -24px;
}

.sep {
    width: 2px;
    height: 36px;
    margin: 0 16px 0 17px;
    background: #dd7a45;
}

/* info tabs */
.info-tabs {
    height: 107px;
    padding: 0 29px 0 27px;
    display: grid;
    grid-template-columns: repeat(7, 1fr);
    justify-items: center;
    border-top: 2px solid #dcdcdc;
    border-bottom: 2px solid #dcdcdc;
    font-size: 43.5px;
    line-height: 99px;
    color: #666;
}

.info-tabs .active {
    height: 102px;
}

/* cards */
.cards {
    height: 132px;
    padding: 11px 28px 0 36px;
    display: grid;
    grid-template-columns: 499px 499px;
    gap: 18px;
    overflow: hidden;
}

.card {
    position: relative;
    height: 200px;
    padding: 30px 0 0 24px;
    overflow: hidden;
    border-radius: 24px;
    background: #fff8f5;
}

.art {
    position: absolute;
    left: 0;
    top: 0;
}

.card-title {
    position: relative;
    height: 48px;
    display: flex;
    align-items: center;
}

.card-title h3 {
    margin: -4px 13px 0 12px;
    font-size: 41.5px;
    line-height: 44px;
    font-weight: 700;
}

.vs-text {
    font-family: "Open Sans", sans-serif;
    font-size: 33px;
    font-weight: 800;
    font-style: italic;
    fill: #fff;
}

.rank-text {
    position: relative;
    margin: 19px 0 0 2px;
    font-size: 35px;
    line-height: 50px;
    color: #666;
}

.rank-text b {
    color: #e04a14;
    font-weight: 700;
    font-size: 37px;
}

.vote {
    position: relative;
    width: 436px;
    height: 76px;
    margin: 24px 0 0 10px;
    display: flex;
    gap: 6px;
    border: 5px solid #fff;
    border-radius: 38px;
    background: #fff;
    overflow: hidden;
    font-size: 34px;
    line-height: 50px;
}

.bull,
.bear {
    flex: 1;
}

.bull {
    padding-left: 102px;
    background: radial-gradient(circle at 44px 38px, #fff 28px, transparent 29px) #fddcd9;
    color: #d4481c;
}

.bear {
    padding-left: 38px;
    background: radial-gradient(circle at 166px 38px, #fff 28px, transparent 29px) #d6eedc;
    color: #3aa862;
}

/* bottom bar */
.bottom-bar {
    position: relative;
    height: 136px;
    display: grid;
    grid-template-columns: 275px repeat(4, 201px);
    border-top: 2px solid #d8dadd;
    background: #f7f8fa;
}

.index {
    padding-left: 36px;
}

.tri-up {
    display: block;
    width: 0;
    margin: 8px 0 0 91px;
    border: 11px solid transparent;
    border-bottom: 7px solid #777;
    border-top: 0;
}

.index-value {
    margin: 7px 0 0 15px;
    font-size: 47px;
    line-height: 46px;
    color: #e02d2d;
}

.index-row {
    display: flex;
    justify-content: space-between;
    margin-top: 5px;
    padding-right: 2px;
    font-size: 40px;
    line-height: 42px;
    color: #666;
}

.index-row b {
    font-weight: 500;
    font-size: 41px;
    color: #e02d2d;
}

.action {
    display: flex;
    flex-direction: column;
    align-items: center;
    padding-top: 9px;
}

.action span {
    margin-top: 13px;
    font-size: 40px;
    line-height: 44px;
    color: #666;
}

.sys-nav {
    height: 116px;
    padding: 32px 0 0 288px;
    background: #000;
}
```
